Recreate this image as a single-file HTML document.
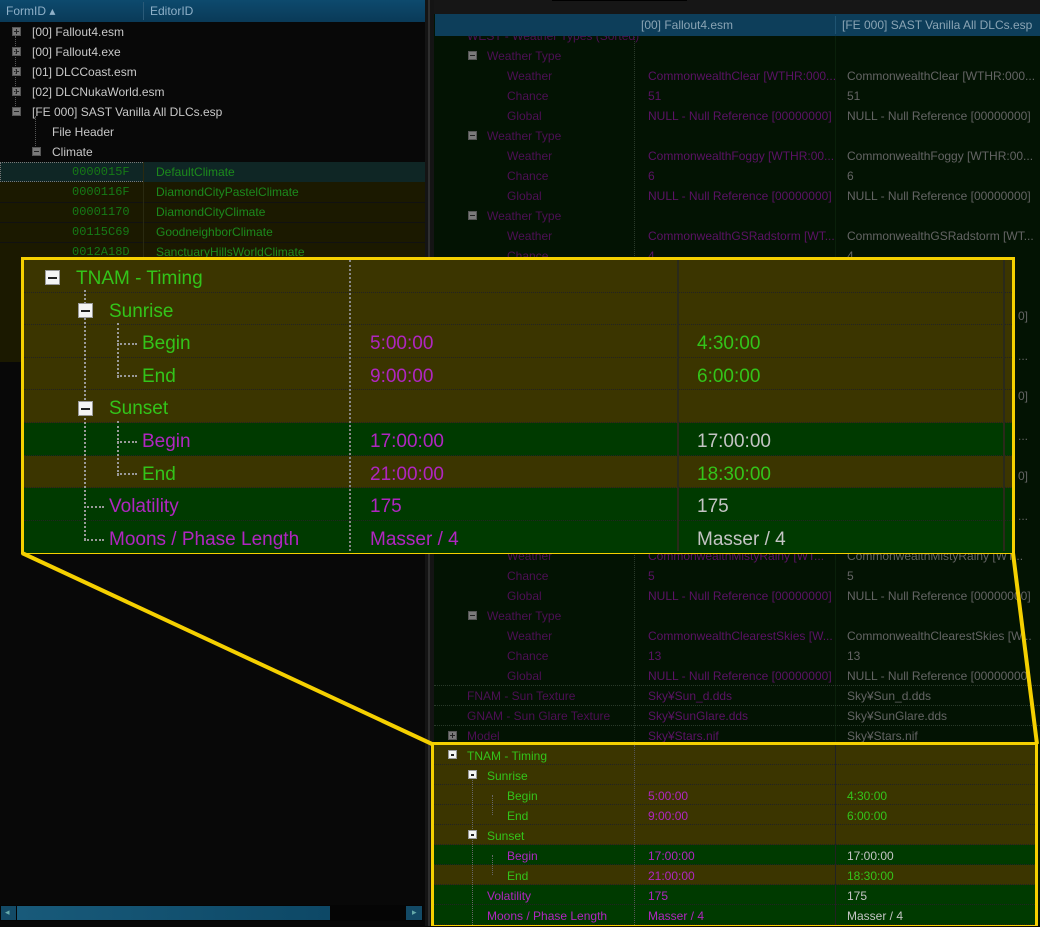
<!DOCTYPE html>
<html><head><meta charset="utf-8"><style>
*{margin:0;padding:0;box-sizing:border-box}
body{width:1040px;height:926px;background:#080808;position:relative;overflow:hidden;font-family:"Liberation Sans",sans-serif;font-size:12px}
.a{position:absolute;white-space:nowrap}
.r{position:absolute;height:20px;line-height:20px;white-space:nowrap}
.pl{color:#4e0f55}.pv{color:#5c1266}.gv{color:#646464}
.ico{position:absolute;width:9px;height:9px;background:#7a7a7a;border:1px solid #555}
.ico:after{content:"";position:absolute;left:1px;top:3px;width:5px;height:1px;background:#222}
.plus:before{content:"";position:absolute;left:3px;top:1px;width:1px;height:5px;background:#222}
.z .row{position:absolute;left:0;width:988px;height:32.6px;line-height:38px;font-size:19px;border-bottom:1px dotted #222}
.b .row{position:absolute;left:0;width:601px;height:20px;line-height:22px;font-size:12px;border-bottom:1px dotted #222}
.ol{background:#3b3500}.gr{background:#003a00}
.g{color:#33c41a}.p{color:#b026c0}.w{color:#c4c4c4}
.wi{position:absolute;background:#f4f4f4;border:1px solid #999}
.wi:after{content:"";position:absolute;background:#222;left:2px;right:2px;top:50%;height:2px;margin-top:-1px}
</style></head><body>

<!-- LEFT PANE -->
<div class="a" style="left:0;top:0;width:425px;height:22px;background:linear-gradient(#0d4a6e,#0a3a58)"></div>
<div class="a" style="left:6px;top:4px;color:#8fb0c8;font-size:12px">FormID ▴</div>
<div class="a" style="left:143px;top:2px;width:1px;height:18px;background:#2a5a78"></div>
<div class="a" style="left:150px;top:4px;color:#8fb0c8">EditorID</div>

<div class="ico plus" style="left:12px;top:27px"></div><div class="r" style="left:32px;top:22px;color:#c8c8c8">[00] Fallout4.esm</div>
<div class="ico plus" style="left:12px;top:47px"></div><div class="r" style="left:32px;top:42px;color:#c8c8c8">[00] Fallout4.exe</div>
<div class="ico plus" style="left:12px;top:67px"></div><div class="r" style="left:32px;top:62px;color:#c8c8c8">[01] DLCCoast.esm</div>
<div class="ico plus" style="left:12px;top:87px"></div><div class="r" style="left:32px;top:82px;color:#c8c8c8">[02] DLCNukaWorld.esm</div>
<div class="ico" style="left:12px;top:107px"></div><div class="r" style="left:32px;top:102px;color:#c8c8c8">[FE 000] SAST Vanilla All DLCs.esp</div>
<div class="r" style="left:52px;top:122px;color:#c8c8c8">File Header</div>
<div class="ico" style="left:32px;top:147px"></div><div class="r" style="left:52px;top:142px;color:#c8c8c8">Climate</div>
<div class="a" style="left:15px;top:36px;height:70px;border-left:1px dotted #555"></div>
<div class="a" style="left:35px;top:116px;height:30px;border-left:1px dotted #555"></div>

<div class="a" style="left:0;top:162px;height:20px;background:#0f2625;border:1px dotted #777;border-right:none;width:143px"></div>
<div class="a" style="left:143px;top:162px;width:282px;height:20px;background:#0f2625"></div>
<div class="a" style="left:0;top:182px;width:425px;height:180px;background:#1b1900"></div>
<div class="a" style="left:0;top:202px;width:425px;border-top:1px solid #111"></div>
<div class="a" style="left:0;top:222px;width:425px;border-top:1px solid #111"></div>
<div class="a" style="left:0;top:242px;width:425px;border-top:1px solid #111"></div>
<div class="a" style="left:143px;top:162px;height:100px;border-left:1px solid #2a2a10"></div>
<div class="r" style="left:72px;top:162px;color:#167a16;font-family:'Liberation Mono',monospace">0000015F</div>
<div class="r" style="left:156px;top:162px;color:#1c8a1c">DefaultClimate</div>
<div class="r" style="left:72px;top:182px;color:#167a16;font-family:'Liberation Mono',monospace">0000116F</div>
<div class="r" style="left:156px;top:182px;color:#1c8a1c">DiamondCityPastelClimate</div>
<div class="r" style="left:72px;top:202px;color:#167a16;font-family:'Liberation Mono',monospace">00001170</div>
<div class="r" style="left:156px;top:202px;color:#1c8a1c">DiamondCityClimate</div>
<div class="r" style="left:72px;top:222px;color:#167a16;font-family:'Liberation Mono',monospace">00115C69</div>
<div class="r" style="left:156px;top:222px;color:#1c8a1c">GoodneighborClimate</div>
<div class="r" style="left:72px;top:242px;color:#167a16;font-family:'Liberation Mono',monospace">0012A18D</div>
<div class="r" style="left:156px;top:242px;color:#1c8a1c">SanctuaryHillsWorldClimate</div>

<!-- scrollbar -->
<div class="a" style="left:0;top:905px;width:423px;height:16px;background:#050505"></div>
<div class="a" style="left:1px;top:906px;width:15px;height:14px;background:#134a66"></div>
<div class="a" style="left:17px;top:906px;width:313px;height:14px;background:linear-gradient(90deg,#185a7a,#0d4866)"></div>
<div class="a" style="left:406px;top:906px;width:16px;height:14px;background:#134a66"></div>
<div class="a" style="left:5px;top:907px;color:#6aa;font-size:9px">◂</div>
<div class="a" style="left:412px;top:907px;color:#6aa;font-size:9px">▸</div>

<!-- divider -->
<div class="a" style="left:425px;top:0;width:9px;height:926px;background:#141414"></div>
<div class="a" style="left:428px;top:0;width:2px;height:926px;background:#2e2e2e"></div>

<!-- RIGHT PANE -->
<div class="a" style="left:434px;top:0;width:606px;height:14px;background:#161616"></div>
<div class="a" style="left:552px;top:0;width:135px;height:1px;background:#000"></div>
<div class="a" style="left:434px;top:14px;width:606px;height:912px;background:#031303"></div>
<div class="a" style="left:634px;top:34px;height:710px;border-left:1px dotted #2a3a2a"></div>
<div class="a" style="left:835px;top:34px;height:710px;border-left:1px solid #0a200a"></div>

<div class="r pl" style="left:467px;top:26px">WEST - Weather Types (Sorted)</div>
<div class="a" style="left:435px;top:14px;width:605px;height:22px;background:#0d3e5a"></div>
<div class="a" style="left:641px;top:18px;color:#8aa4b4">[00] Fallout4.esm</div>
<div class="a" style="left:842px;top:18px;color:#8aa4b4">[FE 000] SAST Vanilla All DLCs.esp</div>
<div class="a" style="left:835px;top:16px;width:1px;height:18px;background:#1f5472"></div>

<div class="ico" style="left:468px;top:51px"></div><div class="r pl" style="left:487px;top:46px">Weather Type</div>
<div class="r pl" style="left:507px;top:66px">Weather</div><div class="r pv" style="left:648px;top:66px">CommonwealthClear [WTHR:000...</div><div class="r gv" style="left:847px;top:66px">CommonwealthClear [WTHR:000...</div>
<div class="r pl" style="left:507px;top:86px">Chance</div><div class="r pv" style="left:648px;top:86px">51</div><div class="r gv" style="left:847px;top:86px">51</div>
<div class="r pl" style="left:507px;top:106px">Global</div><div class="r pv" style="left:648px;top:106px">NULL - Null Reference [00000000]</div><div class="r gv" style="left:847px;top:106px">NULL - Null Reference [00000000]</div>
<div class="ico" style="left:468px;top:131px"></div><div class="r pl" style="left:487px;top:126px">Weather Type</div>
<div class="r pl" style="left:507px;top:146px">Weather</div><div class="r pv" style="left:648px;top:146px">CommonwealthFoggy [WTHR:00...</div><div class="r gv" style="left:847px;top:146px">CommonwealthFoggy [WTHR:00...</div>
<div class="r pl" style="left:507px;top:166px">Chance</div><div class="r pv" style="left:648px;top:166px">6</div><div class="r gv" style="left:847px;top:166px">6</div>
<div class="r pl" style="left:507px;top:186px">Global</div><div class="r pv" style="left:648px;top:186px">NULL - Null Reference [00000000]</div><div class="r gv" style="left:847px;top:186px">NULL - Null Reference [00000000]</div>
<div class="ico" style="left:468px;top:211px"></div><div class="r pl" style="left:487px;top:206px">Weather Type</div>
<div class="r pl" style="left:507px;top:226px">Weather</div><div class="r pv" style="left:648px;top:226px">CommonwealthGSRadstorm [WT...</div><div class="r gv" style="left:847px;top:226px">CommonwealthGSRadstorm [WT...</div>
<div class="r pl" style="left:507px;top:246px">Chance</div><div class="r pv" style="left:648px;top:246px">4</div><div class="r gv" style="left:847px;top:246px">4</div>
<div class="r gv" style="left:1018px;top:306px">0]</div><div class="r gv" style="left:1018px;top:346px">...</div><div class="r gv" style="left:1018px;top:386px">0]</div><div class="r gv" style="left:1018px;top:426px">...</div><div class="r gv" style="left:1018px;top:466px">0]</div><div class="r gv" style="left:1018px;top:506px">...</div>
<div class="r pl" style="left:507px;top:546px">Weather</div><div class="r pv" style="left:648px;top:546px">CommonwealthMistyRainy [WT...</div><div class="r gv" style="left:847px;top:546px">CommonwealthMistyRainy [WT...</div>
<div class="r pl" style="left:507px;top:566px">Chance</div><div class="r pv" style="left:648px;top:566px">5</div><div class="r gv" style="left:847px;top:566px">5</div>
<div class="r pl" style="left:507px;top:586px">Global</div><div class="r pv" style="left:648px;top:586px">NULL - Null Reference [00000000]</div><div class="r gv" style="left:847px;top:586px">NULL - Null Reference [00000000]</div>
<div class="ico" style="left:468px;top:611px"></div><div class="r pl" style="left:487px;top:606px">Weather Type</div>
<div class="r pl" style="left:507px;top:626px">Weather</div><div class="r pv" style="left:648px;top:626px">CommonwealthClearestSkies [W...</div><div class="r gv" style="left:847px;top:626px">CommonwealthClearestSkies [W...</div>
<div class="r pl" style="left:507px;top:646px">Chance</div><div class="r pv" style="left:648px;top:646px">13</div><div class="r gv" style="left:847px;top:646px">13</div>
<div class="r pl" style="left:507px;top:666px">Global</div><div class="r pv" style="left:648px;top:666px">NULL - Null Reference [00000000]</div><div class="r gv" style="left:847px;top:666px">NULL - Null Reference [00000000]</div>
<div class="a" style="left:434px;top:685px;width:606px;border-top:1px dotted #2a3a2a"></div>
<div class="r pl" style="left:467px;top:686px">FNAM - Sun Texture</div><div class="r pv" style="left:648px;top:686px">Sky¥Sun_d.dds</div><div class="r gv" style="left:847px;top:686px">Sky¥Sun_d.dds</div>
<div class="a" style="left:434px;top:705px;width:606px;border-top:1px dotted #2a3a2a"></div>
<div class="r pl" style="left:467px;top:706px">GNAM - Sun Glare Texture</div><div class="r pv" style="left:648px;top:706px">Sky¥SunGlare.dds</div><div class="r gv" style="left:847px;top:706px">Sky¥SunGlare.dds</div>
<div class="a" style="left:434px;top:725px;width:606px;border-top:1px dotted #2a3a2a"></div>
<div class="ico plus" style="left:448px;top:731px"></div><div class="r pl" style="left:467px;top:726px">Model</div><div class="r pv" style="left:648px;top:726px">Sky¥Stars.nif</div><div class="r gv" style="left:847px;top:726px">Sky¥Stars.nif</div>

<!-- BOTTOM BOX -->
<div class="a b" style="left:431px;top:742px;width:607px;height:184px;border:3px solid #f5d000;background:#031303">
 <div class="row ol" style="top:0"><span class="a g" style="left:33px">TNAM - Timing</span></div>
 <div class="row ol" style="top:20px"><span class="a g" style="left:53px">Sunrise</span></div>
 <div class="row ol" style="top:40px"><span class="a g" style="left:73px">Begin</span><span class="a p" style="left:214px">5:00:00</span><span class="a g" style="left:413px">4:30:00</span></div>
 <div class="row ol" style="top:60px"><span class="a g" style="left:73px">End</span><span class="a p" style="left:214px">9:00:00</span><span class="a g" style="left:413px">6:00:00</span></div>
 <div class="row ol" style="top:80px"><span class="a g" style="left:53px">Sunset</span></div>
 <div class="row gr" style="top:100px"><span class="a p" style="left:73px">Begin</span><span class="a p" style="left:214px">17:00:00</span><span class="a w" style="left:413px">17:00:00</span></div>
 <div class="row ol" style="top:120px"><span class="a g" style="left:73px">End</span><span class="a p" style="left:214px">21:00:00</span><span class="a g" style="left:413px">18:30:00</span></div>
 <div class="row gr" style="top:140px"><span class="a p" style="left:53px">Volatility</span><span class="a p" style="left:214px">175</span><span class="a w" style="left:413px">175</span></div>
 <div class="row gr" style="top:160px"><span class="a p" style="left:53px">Moons / Phase Length</span><span class="a p" style="left:214px">Masser / 4</span><span class="a w" style="left:413px">Masser / 4</span></div>
 <div class="a" style="left:200px;top:0;height:180px;border-left:1px dotted #555"></div>
 <div class="a" style="left:401px;top:0;height:180px;border-left:1px solid #222"></div>
 <div class="a" style="left:38px;top:30px;height:150px;border-left:1px dotted #666"></div>
 <div class="a" style="left:58px;top:50px;height:20px;border-left:1px dotted #666"></div>
 <div class="a" style="left:58px;top:110px;height:20px;border-left:1px dotted #666"></div>
 <div class="wi" style="left:14px;top:5px;width:9px;height:9px"></div>
 <div class="wi" style="left:34px;top:25px;width:9px;height:9px"></div>
 <div class="wi" style="left:34px;top:85px;width:9px;height:9px"></div>
</div>

<!-- ZOOM BOX -->
<div class="a z" style="left:21px;top:257px;width:994px;height:297px;border:3px solid #f5d000;background:#031303">
 <div class="row ol" style="top:0"><span class="a g" style="left:52px">TNAM - Timing</span></div>
 <div class="row ol" style="top:32.6px"><span class="a g" style="left:85px">Sunrise</span></div>
 <div class="row ol" style="top:65.2px"><span class="a g" style="left:118px">Begin</span><span class="a p" style="left:346px">5:00:00</span><span class="a g" style="left:673px">4:30:00</span></div>
 <div class="row ol" style="top:97.8px"><span class="a g" style="left:118px">End</span><span class="a p" style="left:346px">9:00:00</span><span class="a g" style="left:673px">6:00:00</span></div>
 <div class="row ol" style="top:130.4px"><span class="a g" style="left:85px">Sunset</span></div>
 <div class="row gr" style="top:163px"><span class="a p" style="left:118px">Begin</span><span class="a p" style="left:346px">17:00:00</span><span class="a w" style="left:673px">17:00:00</span></div>
 <div class="row ol" style="top:195.6px"><span class="a g" style="left:118px">End</span><span class="a p" style="left:346px">21:00:00</span><span class="a g" style="left:673px">18:30:00</span></div>
 <div class="row gr" style="top:228.2px"><span class="a p" style="left:85px">Volatility</span><span class="a p" style="left:346px">175</span><span class="a w" style="left:673px">175</span></div>
 <div class="row gr" style="top:260.8px;border-bottom:none"><span class="a p" style="left:85px">Moons / Phase Length</span><span class="a p" style="left:346px">Masser / 4</span><span class="a w" style="left:673px">Masser / 4</span></div>
 <div class="a" style="left:325px;top:0;height:291px;border-left:2px dotted #888"></div>
 <div class="a" style="left:653px;top:0;height:291px;border-left:2px solid #2a2a1a"></div>
 <div class="a" style="left:979px;top:0;height:291px;border-left:2px solid #2a2a1a"></div>
 <div class="a" style="left:60px;top:30px;height:250px;border-left:2px dotted #999"></div>
 <div class="a" style="left:93px;top:63px;height:55px;border-left:2px dotted #999"></div>
 <div class="a" style="left:93px;top:161px;height:55px;border-left:2px dotted #999"></div>
 <div class="a" style="left:93px;top:83px;width:20px;border-top:2px dotted #999"></div>
 <div class="a" style="left:93px;top:115px;width:20px;border-top:2px dotted #999"></div>
 <div class="a" style="left:93px;top:181px;width:20px;border-top:2px dotted #999"></div>
 <div class="a" style="left:93px;top:213px;width:20px;border-top:2px dotted #999"></div>
 <div class="a" style="left:60px;top:246px;width:20px;border-top:2px dotted #999"></div>
 <div class="a" style="left:60px;top:279px;width:20px;border-top:2px dotted #999"></div>
 <div class="wi" style="left:21px;top:10px;width:15px;height:15px"></div>
 <div class="wi" style="left:54px;top:43px;width:15px;height:15px"></div>
 <div class="wi" style="left:54px;top:141px;width:15px;height:15px"></div>
</div>

<svg class="a" style="left:0;top:0" width="1040" height="926">
 <line x1="22" y1="553" x2="432" y2="744" stroke="#f5d000" stroke-width="4"/>
 <line x1="1013" y1="553" x2="1037" y2="744" stroke="#f5d000" stroke-width="4"/>
</svg>
</body></html>
